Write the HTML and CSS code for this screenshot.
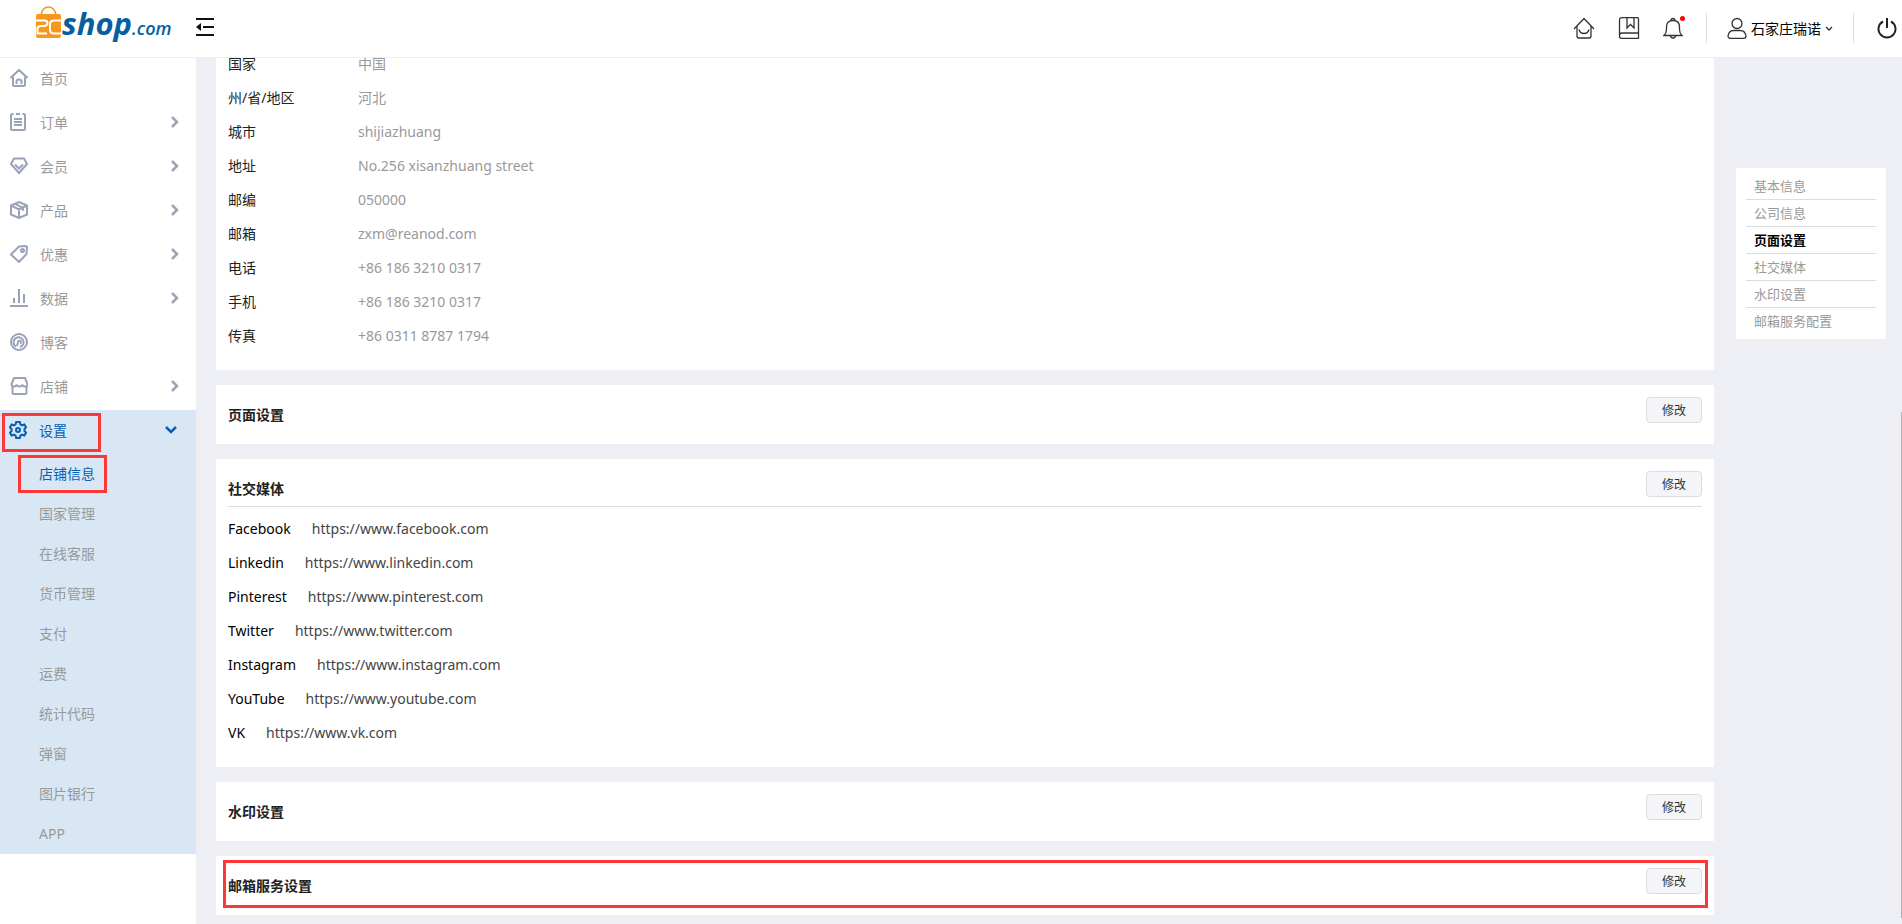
FILE: index.html
```html
<!DOCTYPE html>
<html lang="zh-CN">

<head>
  <meta charset="utf-8">
  <title>店铺信息</title>
  <link rel="stylesheet" href="styles.css">
</head>

<body>

  <header class="header">
    <a class="logo" href="#">
      <svg width="140" height="47" viewBox="0 -5 140 47">
        <path d="M7 10C8 4.500 11 2 14.500 2s6.500 2.500 7.500 8" fill="none" stroke="#f7981d" stroke-width="1.600" />
        <path d="M4 9h21a2 2 0 0 1 2 2v20a2 2 0 0 1-2 2H4a2 2 0 0 1-2-2V11a2 2 0 0 1 2-2z" fill="#f7981d" />
        <path d="M2 15.500h8.500q3 0 3 2.500t-3 3H6.500q-3 0-3 3v4.500H13M27 15.500h-7q-4 0-4 4v5q0 4 4 4h7" fill="none" stroke="#fff" stroke-width="2" />
        <text class="logo-shop" x="28" y="30">shop</text>
        <text class="logo-com" x="98" y="30">.com</text>
      </svg>
    </a>
    <button class="icon-btn menu-btn" aria-label="菜单">
      <svg width="18" height="18" viewBox="0 0 18 18">
        <path d="M0 1h18M7 9h11M0 17h18" stroke="#111" stroke-width="2" />
        <path d="M0 9l5-4v8z" fill="#111" />
      </svg>
    </button>

    <div class="tools">
      <button class="icon-btn" aria-label="店铺首页">
        <svg width="22" height="22" viewBox="0 0 22 22" class="line">
          <path d="M1 12L11 1.500 21 12M4 9.500V19q0 2 2 2h10q2 0 2-2V9.500M6 12.500q1 4 5 4t5-4" />
        </svg>
      </button>
      <button class="icon-btn" aria-label="手册">
        <svg width="22" height="22" viewBox="0 0 22 22" class="line">
          <path d="M4 .700h15.500q1 0 1 1v19.600H3.500q-2 0-2-2V3.200Q1.500.700 4 .700zM1.500 18.500q0-2.500 2.500-2.500h16.500M9 1v10l3.500-3.500L16 11V1" />
        </svg>
      </button>
      <button class="icon-btn bell" aria-label="通知">
        <svg width="20" height="22" viewBox="0 0 20 22" class="line">
          <path d="M1 18.500q2.500-2.500 2.500-6V10q0-6.500 6.500-6.500t6.500 6.500v2.500q0 3.500 2.500 6zM8 3.500Q8 1.500 10 1.500t2 2M7.500 18.500q0 2.500 2.500 2.500t2.500-2.500" />
        </svg>
        <span class="dot"></span>
      </button>
      <button class="user">
        <svg width="20" height="22" viewBox="0 0 20 22" class="line">
          <circle cx="10" cy="6.500" r="5" />
          <path d="M1 19q1-5.500 5.500-5.500h7q4.500 0 5.500 5.500 0 2.300-2.500 2.300h-13Q1 21.300 1 19z" />
        </svg>
        <span>石家庄瑞诺</span>
        <svg width="8" height="8" viewBox="0 0 8 8" class="line"><path d="M1 3l3 3 3-3" /></svg>
      </button>
      <button class="icon-btn" aria-label="退出">
        <svg width="20" height="22" viewBox="0 0 20 22" fill="none" stroke="#222" stroke-width="2">
          <path d="M6 4.500a8.500 8.500 0 1 0 8 0M10 1v10" />
        </svg>
      </button>
    </div>
  </header>

  <div class="layout">
    <nav class="sidebar">
      <ul class="menu">
        <li><a href="#">
            <svg class="icon" viewBox="0 0 18 18"><path d="M.500 9L9 1l8.500 8M3 8v7.500Q3 17 4.500 17h9q1.500 0 1.500-1.500V8M6.500 15v-2.500q0-2 2.500-2t2.500 2V15" /></svg>
            首页</a></li>
        <li><a href="#">
            <svg class="icon" viewBox="0 0 18 18"><path d="M3.500 1H2.500Q1 1 1 2.500v13Q1 17 2.500 17h11q1.500 0 1.500-1.500v-13Q15 1 13.500 1h-1M6 1h4M4 6h8M4 9h8M4 12h8" /></svg>
            订单<svg class="arrow" viewBox="0 0 8 14"><path d="M1 2l5 5-5 5" /></svg></a></li>
        <li><a href="#">
            <svg class="icon" viewBox="0 0 18 18"><path d="M4 1.500h10L17 7l-8 9L1 7zM5 7.500l4 4 4-4" /></svg>
            会员<svg class="arrow" viewBox="0 0 8 14"><path d="M1 2l5 5-5 5" /></svg></a></li>
        <li><a href="#">
            <svg class="icon" viewBox="0 0 18 18"><path d="M9 1l8 3.500v9L9 17l-8-3.500v-9zM1 4.500L9 8.500l8-4M9 8.500V17M5 2.800l8 4v3" /></svg>
            产品<svg class="arrow" viewBox="0 0 8 14"><path d="M1 2l5 5-5 5" /></svg></a></li>
        <li><a href="#">
            <svg class="icon" viewBox="0 0 18 18"><path d="M9 1.500l6.500-.5q1.500 0 1.500 1.500L16.500 9 9 17 1 9.500z" /><circle cx="12.500" cy="5.500" r="1.500" /></svg>
            优惠<svg class="arrow" viewBox="0 0 8 14"><path d="M1 2l5 5-5 5" /></svg></a></li>
        <li><a href="#">
            <svg class="icon" viewBox="0 0 18 18"><path d="M0 17h18M4 14V9M9 14V0M14 14V5" /></svg>
            数据<svg class="arrow" viewBox="0 0 8 14"><path d="M1 2l5 5-5 5" /></svg></a></li>
        <li><a href="#">
            <svg class="icon" viewBox="0 0 18 18"><circle cx="9" cy="9" r="8" /><path d="M6 13.500a5 5 0 1 1 4 .5M7 13l1-3.500a1.500 1.500 0 1 1 2 1" /></svg>
            博客</a></li>
        <li><a href="#">
            <svg class="icon" viewBox="0 0 18 18"><path d="M4 1h11L17.500 7q0 2.500-2.500 2.500T12.500 7.500q-.5 2-3 2t-3-2Q6.500 9.500 4 9.500T1.500 7zM2.500 9.500V15.500Q2.500 17 4 17h11q1.500 0 1.500-1.500v-6" /></svg>
            店铺<svg class="arrow" viewBox="0 0 8 14"><path d="M1 2l5 5-5 5" /></svg></a></li>
        <li class="open"><a href="#">
            <svg class="icon" viewBox="0 0 18 18"><path d="M7.200 1h3.600l.6 2.300 1.600 1 2.400-.8L17 6.300 15.500 8v2l1.500 1.700-1.600 2.800-2.400-.8-1.600 1-.6 2.300H7.200l-.6-2.300-1.600-1-2.400.8L1 11.700 2.500 10V8L1 6.300l1.600-2.800 2.400.8 1.600-1z" /><circle cx="9" cy="9" r="2" /></svg>
            设置<svg class="arrow arrow-down" viewBox="0 0 12 8"><path d="M1 1l5 5 5-5" /></svg></a>
          <span class="mark mark-set"></span>
          <ul class="submenu">
            <li class="current"><a href="#">店铺信息</a><span class="mark mark-info"></span></li>
            <li><a href="#">国家管理</a></li>
            <li><a href="#">在线客服</a></li>
            <li><a href="#">货币管理</a></li>
            <li><a href="#">支付</a></li>
            <li><a href="#">运费</a></li>
            <li><a href="#">统计代码</a></li>
            <li><a href="#">弹窗</a></li>
            <li><a href="#">图片银行</a></li>
            <li><a href="#">APP</a></li>
          </ul>
        </li>
      </ul>
    </nav>

    <main class="content">
      <section class="card company">
        <dl class="info">
          <div><dt>国家</dt><dd>中国</dd></div>
          <div><dt>州/省/地区</dt><dd>河北</dd></div>
          <div><dt>城市</dt><dd>shijiazhuang</dd></div>
          <div><dt>地址</dt><dd>No.256 xisanzhuang street</dd></div>
          <div><dt>邮编</dt><dd>050000</dd></div>
          <div><dt>邮箱</dt><dd>zxm@reanod.com</dd></div>
          <div><dt>电话</dt><dd>+86 186 3210 0317</dd></div>
          <div><dt>手机</dt><dd>+86 186 3210 0317</dd></div>
          <div><dt>传真</dt><dd>+86 0311 8787 1794</dd></div>
        </dl>
      </section>

      <section class="card">
        <div class="card-head">
          <h2>页面设置</h2>
          <button class="edit">修改</button>
        </div>
      </section>

      <section class="card">
        <div class="card-head line-bottom">
          <h2>社交媒体</h2>
          <button class="edit">修改</button>
        </div>
        <dl class="info social">
          <div><dt>Facebook</dt><dd>https://www.facebook.com</dd></div>
          <div><dt>Linkedin</dt><dd>https://www.linkedin.com</dd></div>
          <div><dt>Pinterest</dt><dd>https://www.pinterest.com</dd></div>
          <div><dt>Twitter</dt><dd>https://www.twitter.com</dd></div>
          <div><dt>Instagram</dt><dd>https://www.instagram.com</dd></div>
          <div><dt>YouTube</dt><dd>https://www.youtube.com</dd></div>
          <div><dt>VK</dt><dd>https://www.vk.com</dd></div>
        </dl>
      </section>

      <section class="card">
        <div class="card-head">
          <h2>水印设置</h2>
          <button class="edit">修改</button>
        </div>
      </section>

      <section class="card">
        <div class="card-head">
          <h2>邮箱服务设置</h2>
          <button class="edit">修改</button>
        </div>
        <span class="mark mark-mail"></span>
      </section>
    </main>

    <aside class="side">
      <ul class="toc">
        <li><a href="#">基本信息</a></li>
        <li><a href="#">公司信息</a></li>
        <li class="on"><a href="#">页面设置</a></li>
        <li><a href="#">社交媒体</a></li>
        <li><a href="#">水印设置</a></li>
        <li><a href="#">邮箱服务配置</a></li>
      </ul>
    </aside>
  </div>

  <div class="scroll-thumb"></div>

</body>

</html>
```
FILE: styles.css
```css
* {
  box-sizing: border-box;
}

body {
  margin: 0;
  background-color: #eeeff5;
  font-family: "Noto Sans", "Noto Sans CJK SC", sans-serif;
  font-size: 14px;
  color: #222;
}

ul,
dl,
dd,
h2 {
  margin: 0;
  padding: 0;
  list-style: none;
}

a {
  color: inherit;
  text-decoration: none;
}

button {
  font: inherit;
  color: inherit;
  cursor: pointer;
}

svg {
  display: block;
  flex: none;
}

/* header */

.header {
  position: sticky;
  top: 0;
  z-index: 10;
  display: flex;
  align-items: center;
  height: 58px;
  padding: 0 5px 10px 34px;
  background-color: #fff;
  border-bottom: 1px solid #eeeff2;
}

.logo {
  width: 162px;
}

.logo-shop,
.logo-com {
  font-family: "Open Sans", sans-serif;
  font-style: italic;
  fill: #075f9f;
}

.logo-shop {
  font-size: 31px;
  font-weight: bold;
}

.logo-com {
  font-size: 18px;
  font-weight: 600;
}

.icon-btn,
.user {
  padding: 0;
  border: 0;
  background: none;
}

.menu-btn {
  padding-top: 6px;
}

.line {
  fill: none;
  stroke: #333;
  stroke-width: 1.3;
}

.tools {
  display: flex;
  align-items: center;
  gap: 23px;
  margin-left: auto;
  padding-top: 9px;
}

.bell {
  position: relative;
}

.dot {
  position: absolute;
  top: -1px;
  right: -2px;
  width: 5px;
  height: 5px;
  border-radius: 50%;
  background-color: #f00;
}

.user {
  display: flex;
  align-items: center;
  gap: 4px;
  height: 30px;
  padding: 0 20px;
  border-left: 1px solid #ddd;
  border-right: 1px solid #ddd;
  color: #000;
}

/* sidebar */

.layout {
  display: flex;
  align-items: stretch;
  min-height: calc(100vh - 58px);
}

.sidebar {
  flex: none;
  width: 196px;
  background-color: #fff;
  color: #999;
}

.menu > li > a {
  display: flex;
  align-items: center;
  height: 44px;
  padding: 0 17px 5px 10px;
}

.icon {
  width: 18px;
  height: 18px;
  margin-right: 12px;
  fill: none;
  stroke: #99a2b8;
  stroke-width: 2;
}

.arrow {
  width: 8px;
  height: 14px;
  margin-left: auto;
  fill: none;
  stroke: #99a2b8;
  stroke-width: 2.5;
}

.arrow-down {
  width: 12px;
  height: 8px;
}

.open {
  position: relative;
  background-color: #d9e7f4;
}

.menu > .open > a {
  padding-right: 19px;
  padding-left: 9px;
}

.open > a,
.current {
  color: #0560b6;
}

.open .icon,
.open .arrow {
  stroke: #0560b6;
}

.submenu > li {
  position: relative;
  height: 40px;
  padding-left: 39px;
  line-height: 40px;
}

/* red frames */

.mark {
  position: absolute;
  border: 3px solid #fc3737;
  pointer-events: none;
}

.mark-set {
  top: 3px;
  left: 2px;
  width: 99px;
  height: 39px;
}

.mark-info {
  top: 1px;
  left: 18px;
  width: 89px;
  height: 38px;
}

.mark-mail {
  top: 4px;
  right: 6px;
  bottom: 7px;
  left: 7px;
}

/* content */

.content {
  flex: 1;
  display: flex;
  flex-direction: column;
  gap: 15px;
  padding: 0 22px 9px 20px;
}

.card {
  position: relative;
  padding: 12px;
  background-color: #fff;
}

/* runs up under the header */
.company {
  margin-top: -16px;
  padding-top: 0;
}

.card-head {
  display: flex;
  justify-content: space-between;
  align-items: flex-start;
  height: 35px;
}

.card-head h2 {
  font-size: 14px;
  font-weight: bold;
  line-height: 35px;
}

.line-bottom {
  height: 36px;
  border-bottom: 1px solid #ddd;
}

.edit {
  width: 56px;
  height: 26px;
  padding: 0;
  border: 1px solid #ddd;
  border-radius: 4px;
  background-color: #f3f5f9;
  font-size: 12px;
  color: #333;
}

.info {
  padding: 5px 0;
}

.info div {
  display: flex;
  line-height: 34px;
}

.info dt {
  width: 130px;
}

.info dd {
  color: #999;
}

.social div {
  gap: 21px;
}

.social dt {
  width: auto;
  color: #000;
}

.social dd {
  color: #444;
}

/* page index on the right */

.side {
  flex: none;
  width: 166px;
  padding: 110px 16px 0 0;
}

.toc {
  padding: 5px 10px;
  background-color: #fff;
  font-size: 13px;
  color: #999;
}

.toc li {
  padding-left: 8px;
  line-height: 26px;
  border-bottom: 1px solid #ddd;
}

.toc li:last-child {
  border-bottom: 0;
}

.toc .on {
  color: #000;
  font-weight: bold;
}

.scroll-thumb {
  position: fixed;
  top: 412px;
  right: 0;
  bottom: 6px;
  width: 1px;
  background-color: #b5b5b5;
}
```
